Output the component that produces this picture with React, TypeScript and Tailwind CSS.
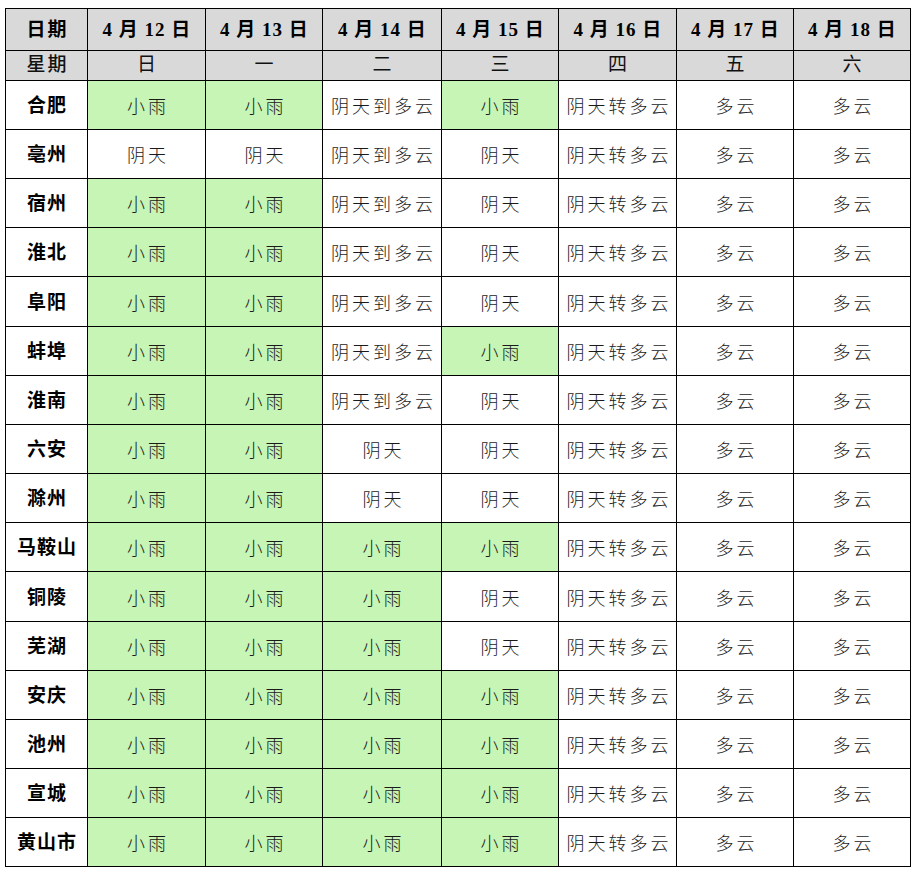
import React from "react";

const dates = ["4 月 12 日", "4 月 13 日", "4 月 14 日", "4 月 15 日", "4 月 16 日", "4 月 17 日", "4 月 18 日"];
const weekdays = ["日", "一", "二", "三", "四", "五", "六"];

const R = "小雨";
const Y = "阴天";
const YD = "阴天到多云";
const YZ = "阴天转多云";
const D = "多云";

const rows: [string, string[]][] = [
  ["合肥", [R, R, YD, R, YZ, D, D]],
  ["亳州", [Y, Y, YD, Y, YZ, D, D]],
  ["宿州", [R, R, YD, Y, YZ, D, D]],
  ["淮北", [R, R, YD, Y, YZ, D, D]],
  ["阜阳", [R, R, YD, Y, YZ, D, D]],
  ["蚌埠", [R, R, YD, R, YZ, D, D]],
  ["淮南", [R, R, YD, Y, YZ, D, D]],
  ["六安", [R, R, Y, Y, YZ, D, D]],
  ["滁州", [R, R, Y, Y, YZ, D, D]],
  ["马鞍山", [R, R, R, R, YZ, D, D]],
  ["铜陵", [R, R, R, Y, YZ, D, D]],
  ["芜湖", [R, R, R, Y, YZ, D, D]],
  ["安庆", [R, R, R, R, YZ, D, D]],
  ["池州", [R, R, R, R, YZ, D, D]],
  ["宣城", [R, R, R, R, YZ, D, D]],
  ["黄山市", [R, R, R, R, YZ, D, D]],
];

const rowH = [
  "h-[49px]", "h-[49px]", "h-[49px]", "h-[49px]", "h-[50px]", "h-[49px]", "h-[49px]", "h-[49px]",
  "h-[49px]", "h-[49px]", "h-[50px]", "h-[49px]", "h-[49px]", "h-[49px]", "h-[49px]", "h-[49px]",
];

const font = "font-['Liberation_Serif','Noto_Sans_CJK_SC',serif]";
const cell = "flex items-center justify-center border-r border-b border-black";

export default function App() {
  return (
    <div className="bg-white w-[918px] h-[877px] pl-[5px] pt-[8px]">
      <div
        className={`grid grid-cols-[82px_118px_117px_119px_117px_118px_117px_117px] border-l border-t border-black w-[906px] text-black ${font}`}
      >
        <div className={`${cell} h-[42px] bg-[#d9d9d9] text-[19px] font-bold tracking-[2px] pt-[2px]`}>
          <span className="mr-[-2px]">日期</span>
        </div>
        {dates.map((d) => (
          <div key={d} className={`${cell} h-[42px] bg-[#d9d9d9] text-[19px] font-bold tracking-[1px] pt-[2px]`}>
            <span className="mr-[-1px]">{d}</span>
          </div>
        ))}
        <div className={`${cell} h-[30px] bg-[#d9d9d9] text-[19px] font-medium tracking-[2px] text-[#111]`}>
          <span className="mr-[-2px]">星期</span>
        </div>
        {weekdays.map((w) => (
          <div key={w} className={`${cell} h-[30px] bg-[#d9d9d9] text-[19px] text-[#111]`}>
            {w}
          </div>
        ))}
        {rows.map(([city, vals], i) => (
          <React.Fragment key={city}>
            <div className={`${cell} ${rowH[i]} bg-white text-[19px] font-bold tracking-[1px] pt-[3px]`}>
              <span className="mr-[-1px]">{city}</span>
            </div>
            {vals.map((v, j) => (
              <div
                key={j}
                className={`${cell} ${rowH[i]} ${v === R ? "bg-[#c6f5b6]" : "bg-white"} text-[18px] font-light tracking-[3px] text-[#1a1a1a] font-['Noto_Sans_CJK_SC',sans-serif] pt-[1px]`}
              >
                <span className="mr-[-3px]">{v}</span>
              </div>
            ))}
          </React.Fragment>
        ))}
      </div>
    </div>
  );
}
